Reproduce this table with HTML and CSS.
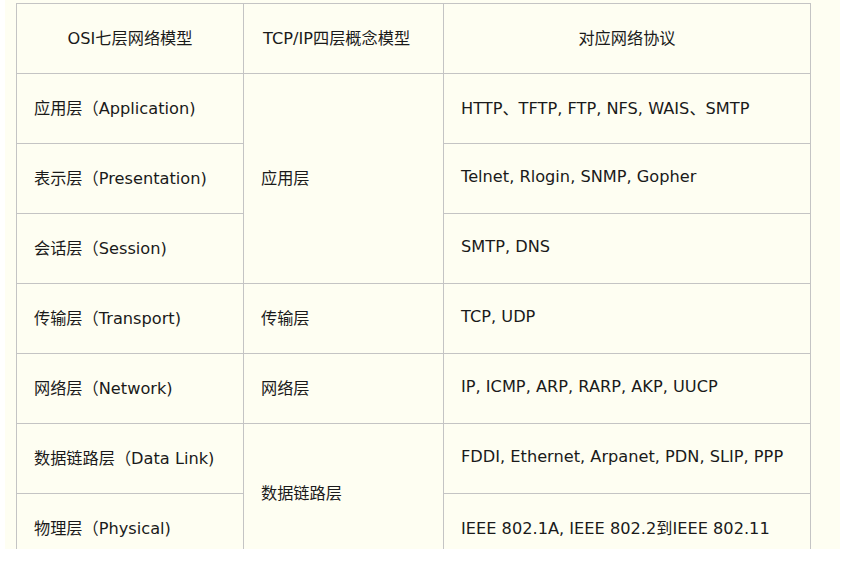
FILE: index.html
```html
<!DOCTYPE html>
<html>
<head>
<meta charset="utf-8">
<link rel="stylesheet" href="styles.css">
</head>
<body>
<div class="wrap">
<table class="osi">
<colgroup><col class="c1"><col class="c2"><col class="c3"></colgroup>
<tr class="head"><th>OSI七层网络模型</th><th class="left">TCP/IP四层概念模型</th><th>对应网络协议</th></tr>
<tr><td>应用层（Application)</td><td rowspan="3">应用层</td><td>HTTP、TFTP, FTP, NFS, WAIS、SMTP</td></tr>
<tr><td>表示层（Presentation)</td><td>Telnet, Rlogin, SNMP, Gopher</td></tr>
<tr><td>会话层（Session)</td><td>SMTP, DNS</td></tr>
<tr><td>传输层（Transport)</td><td>传输层</td><td>TCP, UDP</td></tr>
<tr><td>网络层（Network)</td><td>网络层</td><td>IP, ICMP, ARP, RARP, AKP, UUCP</td></tr>
<tr><td>数据链路层（Data Link)</td><td rowspan="2">数据链路层</td><td>FDDI, Ethernet, Arpanet, PDN, SLIP, PPP</td></tr>
<tr><td>物理层（Physical)</td><td>IEEE 802.1A, IEEE 802.2到IEEE 802.11</td></tr>
</table>
</div>
</body>
</html>
```
FILE: styles.css
```css
html, body { margin: 0; padding: 0; background: #ffffff; }
.wrap {
  margin-left: 5px;
  width: 835px;
  height: 549px;
  overflow: hidden;
  background: #fefef2;
  padding: 3px 0 0 11px;
  box-sizing: border-box;
}
.osi {
  border-collapse: collapse;
  width: 794px;
  table-layout: fixed;
  font-family: "DejaVu Sans", "Noto Sans CJK SC", sans-serif;
  font-size: 16.2px;
  color: #1a1a1a;
}
.c1 { width: 227px; }
.c2 { width: 200px; }
.c3 { width: 367px; }
.osi th, .osi td {
  border: 1px solid #c4c4c4;
  height: 70px;
  padding: 0 0 4px 17px;
  vertical-align: middle;
  text-align: left;
  font-weight: normal;
  box-sizing: border-box;
}
.osi th { text-align: center; padding: 0 0 4px 0; }
.osi th.left { text-align: left; padding-left: 19px; }
```
